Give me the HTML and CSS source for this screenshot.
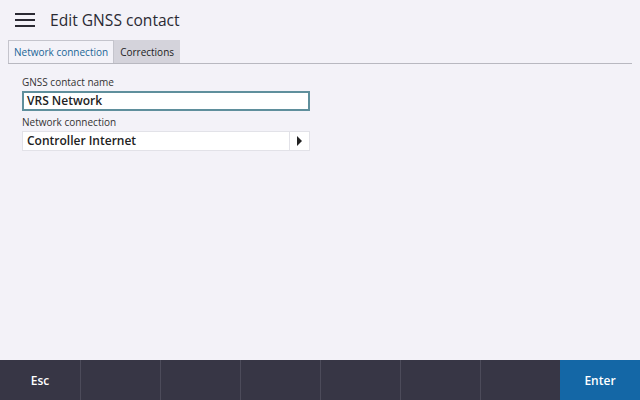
FILE: index.html
```html
<!DOCTYPE html>
<html>
<head>
  <title>Edit GNSS contact</title>
  <link rel="stylesheet" href="styles.css">
</head>
<body>
  <div class="app">
    <header class="header">
      <div class="menu-icon">
        <span></span><span></span><span></span>
      </div>
      <h1>Edit GNSS contact</h1>
    </header>

    <div class="tabs">
      <div class="tab active">Network connection</div>
      <div class="tab">Corrections</div>
    </div>

    <div class="form">
      <label class="label">GNSS contact name</label>
      <div class="input">VRS Network</div>
      <label class="label">Network connection</label>
      <div class="select">
        <div class="select-value">Controller Internet</div>
        <div class="select-arrow"></div>
      </div>
    </div>

    <footer class="softkeys">
      <div class="key">Esc</div>
      <div class="key"></div>
      <div class="key"></div>
      <div class="key"></div>
      <div class="key"></div>
      <div class="key"></div>
      <div class="key"></div>
      <div class="key enter">Enter</div>
    </footer>
  </div>
</body>
</html>
```

FILE: styles.css
```css
body {
  margin: 0;
  font-family: "Open Sans", "Noto Sans", sans-serif;
  background-color: #f3f2f8;
  color: #222;
}

.app {
  width: 640px;
  height: 400px;
  display: flex;
  flex-direction: column;
}

.header {
  height: 40px;
  display: flex;
  align-items: center;
}

.menu-icon {
  width: 20px;
  margin-left: 15px;
  margin-right: 15px;
  display: flex;
  flex-direction: column;
  gap: 4px;
}

.menu-icon span {
  height: 2px;
  background-color: #2a2a33;
}

h1 {
  margin: 0;
  font-size: 15.6px;
  font-weight: normal;
  color: #2a2a33;
}

.tabs {
  display: flex;
  margin: 0 8px;
  height: 23px;
  border-bottom: 1px solid #b8b8c0;
}

.tab {
  font-size: 10px;
  padding: 0 6px;
  display: flex;
  align-items: center;
  background-color: #d4d3db;
  color: #222;
}

.tab.active {
  background-color: #f3f2f8;
  color: #1a6596;
  border: 1px solid #c4c4cc;
  border-bottom: none;
  padding: 0 5px;
}

.form {
  padding: 11px 22px 0;
  width: 288px;
  flex: 1;
}

.label {
  display: block;
  font-size: 10px;
  color: #333;
  line-height: 15px;
}

.input {
  height: 16px;
  border: 2px solid #5f8f9c;
  background-color: #fff;
  font-size: 12px;
  font-weight: 600;
  line-height: 16px;
  padding: 0 3px;
  margin: 1px 0 4px;
}

.select {
  height: 20px;
  box-sizing: border-box;
  border: 1px solid #e2e2e8;
  background-color: #fff;
  display: flex;
  margin-top: 1px;
}

.select-value {
  flex: 1;
  font-size: 12px;
  font-weight: 600;
  line-height: 18px;
  padding-left: 4px;
}

.select-arrow {
  width: 19px;
  border-left: 1px solid #e2e2e8;
  display: flex;
  align-items: center;
  justify-content: center;
}

.select-arrow::after {
  content: "";
  border-left: 5px solid #222;
  border-top: 5px solid transparent;
  border-bottom: 5px solid transparent;
}

.softkeys {
  height: 40px;
  display: flex;
  background-color: #373645;
}

.key {
  width: 80px;
  border-left: 1px solid #4c4b5a;
  box-sizing: border-box;
  color: #fff;
  font-size: 12px;
  font-weight: 600;
  display: flex;
  align-items: center;
  justify-content: center;
}

.key:first-child {
  border-left: none;
}

.key.enter {
  background-color: #1467a6;
  border-left: none;
}
```
